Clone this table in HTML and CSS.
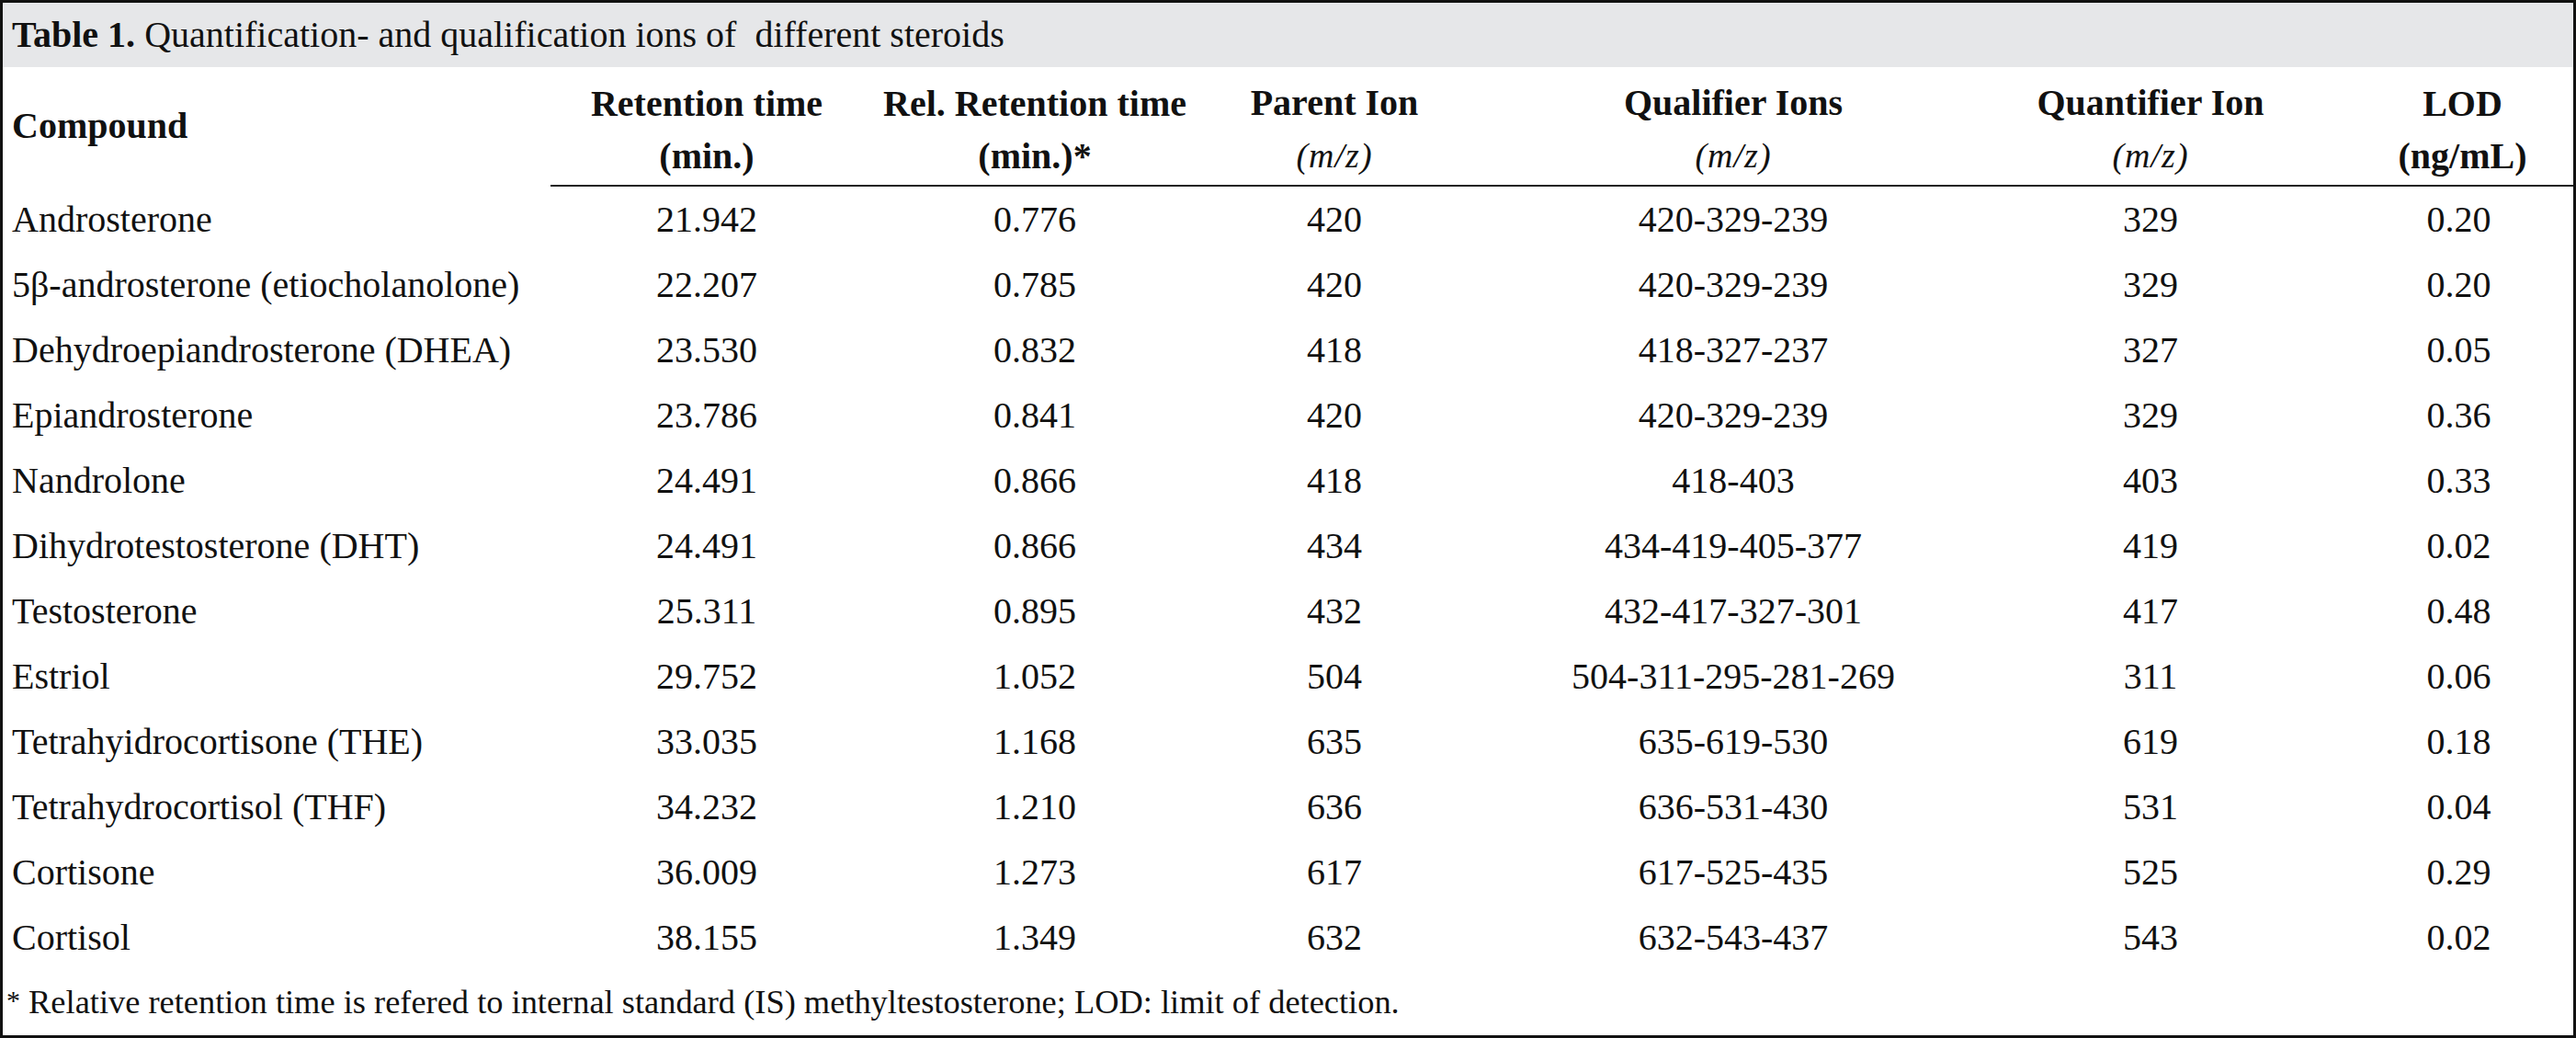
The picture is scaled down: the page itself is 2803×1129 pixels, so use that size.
FILE: index.html
```html
<!DOCTYPE html>
<html>
<head>
<meta charset="utf-8">
<link rel="stylesheet" href="styles.css">
</head>
<body>
<div class="frame">
  <div class="caption"><b>Table 1.</b> Quantification- and qualification ions of&nbsp; different steroids</div>
  <table class="data">
    <colgroup>
      <col class="c1"><col class="c2"><col class="c3"><col class="c4"><col class="c5"><col class="c6"><col class="c7">
    </colgroup>
    <thead>
      <tr>
        <th class="left first">Compound</th>
        <th>Retention time<br>(min.)</th>
        <th>Rel. Retention time<br>(min.)*</th>
        <th>Parent Ion<br><span class="mz">(m/z)</span></th>
        <th>Qualifier Ions<br><span class="mz">(m/z)</span></th>
        <th>Quantifier Ion<br><span class="mz">(m/z)</span></th>
        <th class="lod">LOD<br>(ng/mL)</th>
      </tr>
    </thead>
    <tbody>
      <tr><td class="left">Androsterone</td><td>21.942</td><td>0.776</td><td>420</td><td>420-329-239</td><td>329</td><td class="lod">0.20</td></tr>
      <tr><td class="left">5β-androsterone (etiocholanolone)</td><td>22.207</td><td>0.785</td><td>420</td><td>420-329-239</td><td>329</td><td class="lod">0.20</td></tr>
      <tr><td class="left">Dehydroepiandrosterone (DHEA)</td><td>23.530</td><td>0.832</td><td>418</td><td>418-327-237</td><td>327</td><td class="lod">0.05</td></tr>
      <tr><td class="left">Epiandrosterone</td><td>23.786</td><td>0.841</td><td>420</td><td>420-329-239</td><td>329</td><td class="lod">0.36</td></tr>
      <tr><td class="left">Nandrolone</td><td>24.491</td><td>0.866</td><td>418</td><td>418-403</td><td>403</td><td class="lod">0.33</td></tr>
      <tr><td class="left">Dihydrotestosterone (DHT)</td><td>24.491</td><td>0.866</td><td>434</td><td>434-419-405-377</td><td>419</td><td class="lod">0.02</td></tr>
      <tr><td class="left">Testosterone</td><td>25.311</td><td>0.895</td><td>432</td><td>432-417-327-301</td><td>417</td><td class="lod">0.48</td></tr>
      <tr><td class="left">Estriol</td><td>29.752</td><td>1.052</td><td>504</td><td>504-311-295-281-269</td><td>311</td><td class="lod">0.06</td></tr>
      <tr><td class="left">Tetrahyidrocortisone (THE)</td><td>33.035</td><td>1.168</td><td>635</td><td>635-619-530</td><td>619</td><td class="lod">0.18</td></tr>
      <tr><td class="left">Tetrahydrocortisol (THF)</td><td>34.232</td><td>1.210</td><td>636</td><td>636-531-430</td><td>531</td><td class="lod">0.04</td></tr>
      <tr><td class="left">Cortisone</td><td>36.009</td><td>1.273</td><td>617</td><td>617-525-435</td><td>525</td><td class="lod">0.29</td></tr>
      <tr><td class="left">Cortisol</td><td>38.155</td><td>1.349</td><td>632</td><td>632-543-437</td><td>543</td><td class="lod">0.02</td></tr>
    </tbody>
  </table>
  <div class="footnote"><span class="ast">*</span> Relative retention time is refered to internal standard (IS) methyltestosterone; LOD: limit of detection.</div>
</div>
</body>
</html>
```

FILE: styles.css
```css
html, body {
  margin: 0;
  padding: 0;
  background: #fff;
}

.frame {
  box-sizing: border-box;
  width: 2803px;
  height: 1129px;
  border: 3px solid #111;
  font-family: "Liberation Serif", "DejaVu Serif", serif;
  color: #111;
  display: flex;
  flex-direction: column;
}

.caption {
  background: #e6e7e9;
  height: 70px;
  line-height: 70px;
  padding-left: 10px;
  font-size: 40px;
  white-space: nowrap;
}

.data {
  border-collapse: separate;
  border-spacing: 0;
  table-layout: fixed;
  width: 2797px;
  font-size: 40px;
}

.c1 { width: 596px; }
.c2 { width: 340px; }
.c3 { width: 374px; }
.c4 { width: 278px; }
.c5 { width: 590px; }
.c6 { width: 318px; }
.c7 { width: 301px; }

.data th {
  font-weight: bold;
  text-align: center;
  line-height: 57px;
  height: 114px;
  padding: 10px 0 3px 0;
  vertical-align: middle;
  border-bottom: 2px solid #222;
  white-space: nowrap;
}

.data th.first {
  border-bottom: 2px solid transparent;
  padding-bottom: 7px;
  padding-top: 6px;
}

.data .left {
  text-align: left;
  padding-left: 10px;
}

.data th.lod {
  padding-left: 60px;
}

.data td.lod {
  padding-left: 52px;
}

.mz {
  font-weight: normal;
  font-style: italic;
  font-size: 38px;
  letter-spacing: 1px;
}

.data td {
  height: 71px;
  padding: 0;
  text-align: center;
  vertical-align: middle;
  white-space: nowrap;
  line-height: 71px;
}

.footnote {
  height: 70px;
  line-height: 70px;
  font-size: 36.4px;
  padding-left: 4px;
  white-space: nowrap;
}

.ast {
  font-size: 30px;
  position: relative;
  top: -4px;
}
```
